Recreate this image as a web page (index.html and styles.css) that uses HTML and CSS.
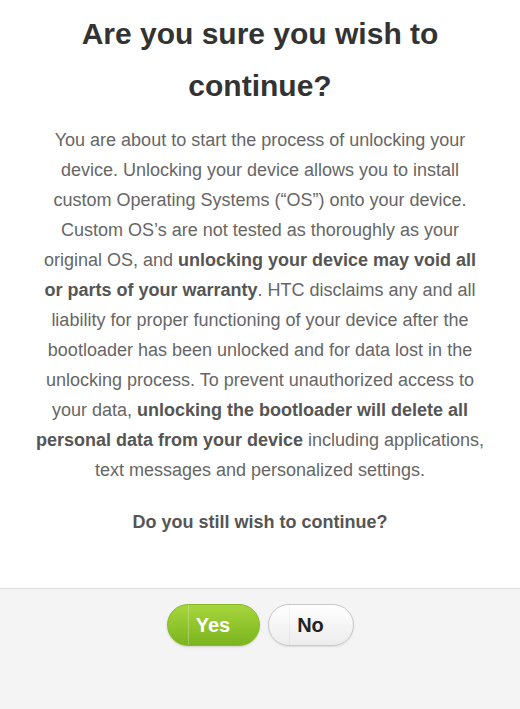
FILE: index.html
```html
<!DOCTYPE html>
<html>
<head>
<meta charset="utf-8">
<link rel="stylesheet" href="styles.css">
</head>
<body>
<div class="dialog">
  <div class="content">
    <h1 class="title">Are you sure you wish to continue?</h1>
    <p class="text">You are about to start the process of unlocking your device. Unlocking your device allows you to install custom Operating Systems (“OS”) onto your device. Custom OS’s are not tested as thoroughly as your original OS, and <b>unlocking your device may void all or parts of your warranty</b>. HTC disclaims any and all liability for proper functioning of your device after the bootloader has been unlocked and for data lost in the unlocking process. To prevent unauthorized access to your data, <b>unlocking the bootloader will delete all personal data from your device</b> including applications, text messages and personalized settings.</p>
    <p class="question">Do you still wish to continue?</p>
  </div>
  <div class="footer">
    <button class="btn btn-yes">Yes</button>
    <button class="btn btn-no">No</button>
  </div>
</div>
</body>
</html>
```

FILE: styles.css
```css
html, body {
  margin: 0;
  padding: 0;
  height: 100%;
}
body {
  font-family: "Liberation Sans", Arial, sans-serif;
  background: #fff;
}
.dialog {
  display: flex;
  flex-direction: column;
  min-height: 100%;
}
.content {
  padding: 8px 34px 0;
  text-align: center;
}
.title {
  margin: 0;
  font-size: 30px;
  line-height: 52px;
  font-weight: bold;
  color: #333;
}
.text {
  margin: 13px 0 0;
  font-size: 18px;
  line-height: 30px;
  color: #666;
}
.text b {
  color: #555;
}
.question {
  margin: 22px 0 0;
  font-size: 18px;
  line-height: 30px;
  font-weight: bold;
  color: #555;
}
.footer {
  flex: 1;
  margin-top: 51px;
  border-top: 1px solid #dcdcdc;
  background: #f4f4f4;
  display: flex;
  justify-content: center;
  align-items: flex-start;
  gap: 8px;
  padding-top: 15px;
}
.btn {
  font-family: "Liberation Sans", Arial, sans-serif;
  font-size: 20px;
  font-weight: bold;
  height: 42px;
  border-radius: 21px;
  padding: 0;
  cursor: pointer;
}
.btn-yes {
  width: 93px;
  color: #fff;
  border: 1px solid #86b82a;
  background:
    linear-gradient(90deg, transparent 20px, rgba(255,255,255,0.25) 20px, rgba(255,255,255,0.25) 21px, transparent 21px),
    linear-gradient(#a8d53c, #7bb51f);
  box-shadow: 0 1px 2px rgba(0,0,0,0.15);
}
.btn-no {
  width: 86px;
  color: #222;
  border: 1px solid #c8c8c8;
  background:
    linear-gradient(90deg, transparent 20px, rgba(0,0,0,0.04) 20px, rgba(0,0,0,0.04) 21px, transparent 21px),
    linear-gradient(#ffffff, #ececec);
  box-shadow: 0 1px 2px rgba(0,0,0,0.1);
}
```
